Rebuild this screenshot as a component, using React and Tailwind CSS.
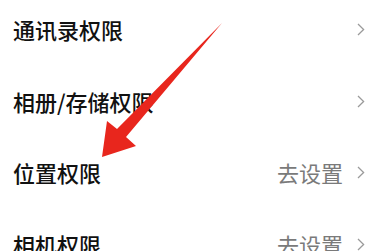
const ROWS = [
  { label: "通讯录权限", value: "" },
  { label: "相册/存储权限", value: "" },
  { label: "位置权限", value: "去设置" },
  { label: "相机权限", value: "去设置" },
];

function Chevron() {
  return (
    <svg width="8" height="13" viewBox="0 0 8 13" className="shrink-0">
      <path d="M1 1 L6.6 6.5 L1 12" fill="none" stroke="#9a9a9a" strokeWidth="1.3" />
    </svg>
  );
}

export default function App() {
  return (
    <div
      className="relative w-[377px] h-[251px] overflow-hidden bg-white"
      style={{ fontFamily: '"Noto Sans CJK SC", "Noto Sans", sans-serif' }}
    >
      <div className="flex flex-col -mt-[6px]">
        {ROWS.map((row) => (
          <div key={row.label} className="h-[71.5px] shrink-0 flex items-center pl-[13px] pr-[12px]">
            <span className="flex-1 text-[22px] font-medium text-[#111]">{row.label}</span>
            {row.value && <span className="text-[22px] text-[#7a7a7a] mr-[14px]">{row.value}</span>}
            <Chevron />
          </div>
        ))}
      </div>
      <svg className="absolute left-0 top-0" width="377" height="251" viewBox="0 0 377 251">
        <polygon
          points="222,23 126,137 136,146 102,157 107,121 117,129"
          fill="#e8261d"
        />
      </svg>
    </div>
  );
}
